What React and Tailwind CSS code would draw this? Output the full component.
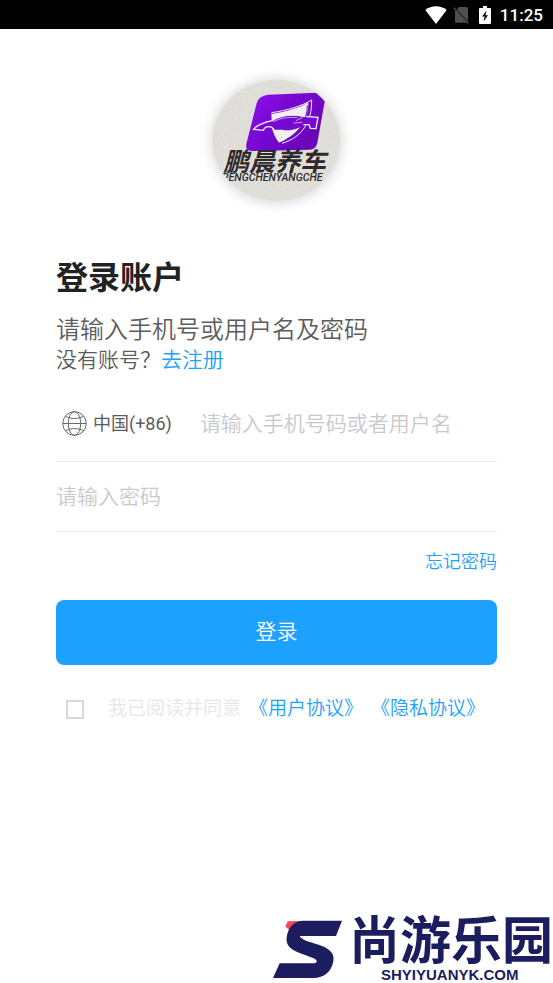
import React, { useState } from 'react';

function WifiIcon() {
  return (
    <svg className="w-[22px] h-[18px]" viewBox="0 0 22 18" fill="#ffffff">
      <path d="M11 18 L0.3 4 Q5 0.3 11 0.3 T21.7 4 Z" />
    </svg>
  );
}

function NoSimIcon() {
  return (
    <svg className="w-4 h-[18px]" viewBox="0 0 16 18">
      <path d="M6 1 H13.5 Q15 1 15 2.5 V15 L3.8 3.4 Z" fill="#505050" />
      <path d="M2 4 L14 16.8 H3.5 Q2 16.8 2 15.4 Z" fill="#505050" />
      <path d="M0.6 1.6 L15.4 17.2" stroke="#505050" strokeWidth="1.3" />
    </svg>
  );
}

function BatteryIcon() {
  return (
    <svg className="w-3 h-[18px]" viewBox="0 0 12 18">
      <path d="M4 0 H8 V2 H11 Q12 2 12 3 V17 Q12 18 11 18 H1 Q0 18 0 17 V3 Q0 2 1 2 H4 Z" fill="#ffffff" />
      <path d="M7.6 4.5 L3 10.6 H5.6 L4.6 15.5 L9 9.2 H6.4 Z" fill="#000000" />
    </svg>
  );
}

function StatusBar() {
  return (
    <header className="flex items-center justify-end h-[29px] pr-[10px] bg-black text-white">
      <WifiIcon />
      <span className="ml-[6px]"><NoSimIcon /></span>
      <span className="ml-[10px]"><BatteryIcon /></span>
      <span className="ml-[9px] text-[17px] leading-5 font-medium">11:25</span>
    </header>
  );
}

function BrandLogo() {
  return (
    <svg className="w-40 h-[150px]" viewBox="3 0 480 450" role="img" aria-label="鹏晨养车">
      <defs>
        <clipPath id="disc">
          <ellipse cx="241" cy="229" rx="191" ry="181" />
        </clipPath>
        <linearGradient id="violet" x1="0" y1="0" x2="1" y2="0.6">
          <stop offset="0" stopColor="#9110ee" />
          <stop offset="0.5" stopColor="#7608d2" />
          <stop offset="1" stopColor="#6a06b8" />
        </linearGradient>
        <filter id="glow" x="-20%" y="-20%" width="140%" height="140%">
          <feGaussianBlur stdDeviation="20" />
        </filter>
        <filter id="grain">
          <feTurbulence type="fractalNoise" baseFrequency="0.12" numOctaves="2" />
          <feColorMatrix values="0 0 0 0 0.4  0 0 0 0 0.38  0 0 0 0 0.36  0 0 0 0.9 -0.3" />
        </filter>
      </defs>
      <ellipse cx="241" cy="231" rx="193" ry="183" fill="#000000" opacity="0.18" filter="url(#glow)" />
      <g clipPath="url(#disc)">
        <rect width="480" height="450" fill="#e2e0db" />
        <rect width="480" height="450" filter="url(#grain)" opacity="0.18" />
        <path
          d="M216 92 L363 86 L387 107 L364 236 Q360 256 340 257 L168 261 Q147 260 151 240 L182 118 Q188 95 216 92 Z"
          fill="url(#violet)"
        />
        <path d="M226 150 C270 143 312 132 337 115 C338 172 304 216 249 236 C238 222 230 205 228 190 Z" fill="#f1eff2" />
        <path d="M226 146 C272 140 318 126 347 108 C348 174 318 220 258 238" fill="none" stroke="#f1eff2" strokeWidth="3" />
        <path
          d="M173 194 C184 182 205 176 226 172 C246 158 268 154 298 154 L326 157 L366 160 L360 194 L342 193 L339 183 L322 183 C306 194 292 199 272 199 L235 199 C231 187 213 184 204 198 L176 199 Z"
          fill="#7608d2"
        />
        <path
          d="M322 182 L339 182 L343 193 L360 194 L366 160 L322 157 C290 150 258 151 228 170 C206 175 184 181 173 196 L202 199 C208 184 228 184 235 199 L262 199"
          fill="none"
          stroke="#f1eff2"
          strokeWidth="4"
        />
        <path d="M232 173 C258 160 280 159 304 161 M300 170 L320 160 M292 177 L320 175" fill="none" stroke="#f1eff2" strokeWidth="2" />
        <path d="M334 124 C334 168 310 206 268 228" fill="none" stroke="#7608d2" strokeWidth="3" />
        <text x="82" y="321" fontSize="77" fontWeight="700" fontStyle="italic" fill="#2e2a2b" fontFamily="'Noto Sans CJK SC', sans-serif">
          鹏晨养车
        </text>
        <text x="380" y="351" textAnchor="end" fontSize="32" fontWeight="500" fontStyle="italic" fill="#2e2a2b" fontFamily="Roboto, sans-serif">
          PENGCHENYANGCHE
        </text>
      </g>
    </svg>
  );
}

function GlobeIcon() {
  return (
    <svg className="w-[25px] h-[25px]" viewBox="0 0 25 25" fill="none" stroke="#6a6a6a" strokeWidth="1">
      <circle cx="12.5" cy="12.5" r="11.8" />
      <ellipse cx="12.5" cy="12.5" rx="6.2" ry="11.8" />
      <path d="M0.7 12.5 H24.3 M3.4 5.4 Q12.5 9.6 21.6 5.4 M3.4 19.6 Q12.5 15.4 21.6 19.6" />
    </svg>
  );
}

function SiteMark() {
  return (
    <footer className="mt-auto flex justify-end items-start text-[#1b1d5e]">
      <svg className="w-[70px] h-[60px] mt-1 mr-[6px]" viewBox="28 48 210 180">
        <path d="M72 52 L115 51 L82 82 L65 68 Z" fill="#fb4458" />
        <path
          d="M116 50 H235 L217 96 H108 C112 106 134 113 160 121 C198 132 213 148 209 172 C203 204 182 222 148 222 H28 L48 178 H152 C162 176 162 168 150 163 L108 147 C78 136 66 122 69 100 C72 74 88 52 116 50 Z"
          fill="currentColor"
        />
      </svg>
      <div className="flex flex-col items-start">
        <span className="text-[51px] leading-[51px] font-bold">尚游乐园</span>
        <span className="ml-8 text-[15px] leading-4 font-bold font-['Liberation_Sans',sans-serif]">SHYIYUANYK.COM</span>
      </div>
    </footer>
  );
}

export default function App() {
  const [account, setAccount] = useState('');
  const [password, setPassword] = useState('');
  const [agreed, setAgreed] = useState(false);

  return (
    <div className="min-h-screen flex flex-col bg-white font-[Roboto,'Noto_Sans_CJK_SC',sans-serif]">
      <StatusBar />

      <main className="px-14 font-[350]">
        <div className="flex justify-center pt-[35px]">
          <BrandLogo />
        </div>

        <h1 className="mt-11 text-[32px] leading-10 font-bold text-[#222222]">登录账户</h1>
        <p className="mt-4 text-2xl leading-8 text-[#5c5c5c]">请输入手机号或用户名及密码</p>
        <p className="text-[21px] leading-7 text-[#5c5c5c]">
          没有账号？<a href="#register" className="text-[#1da1ff]">去注册</a>
        </p>

        <form onSubmit={(e) => e.preventDefault()}>
          <div className="mt-3 flex items-center h-[76px] border-b border-[#ebebeb]">
            <button type="button" className="flex items-center gap-[6px] pl-[6px] text-lg font-normal text-[#5c5c5c]">
              <GlobeIcon />
              中国(+86)
            </button>
            <input
              type="text"
              aria-label="手机号码或者用户名"
              value={account}
              onChange={(e) => setAccount(e.target.value)}
              placeholder="请输入手机号码或者用户名"
              className="ml-7 flex-1 min-w-0 text-[21px] leading-8 text-[#222222] placeholder:text-[#c8c9cc] outline-none"
            />
          </div>
          <div className="flex items-center h-[70px] border-b border-[#ebebeb]">
            <input
              type="password"
              aria-label="密码"
              value={password}
              onChange={(e) => setPassword(e.target.value)}
              placeholder="请输入密码"
              className="flex-1 min-w-0 text-[21px] leading-8 text-[#222222] placeholder:text-[#c8c9cc] outline-none"
            />
          </div>

          <div className="mt-[18px] text-right text-lg leading-6">
            <a href="#forgot" className="text-[#1da1ff]">忘记密码</a>
          </div>

          <button type="submit" className="mt-[26px] w-full h-[65px] rounded-lg bg-[#1da1ff] text-[21px] text-white">
            登录
          </button>

          <div className="mt-8 flex items-center pl-[10px] text-[19px] leading-6">
            <input
              id="agree"
              type="checkbox"
              checked={agreed}
              onChange={(e) => setAgreed(e.target.checked)}
              className="appearance-none w-[18px] h-[19px] border-2 border-[#d8d8d8] checked:bg-[#1da1ff]"
            />
            <label htmlFor="agree" className="ml-6 text-[#e6e6ea]">我已阅读并同意</label>
            <a href="#terms" className="ml-2 text-[#1da1ff]">《用户协议》</a>
            <a href="#privacy" className="ml-2 text-[#1da1ff]">《隐私协议》</a>
          </div>
        </form>
      </main>

      <SiteMark />
    </div>
  );
}
